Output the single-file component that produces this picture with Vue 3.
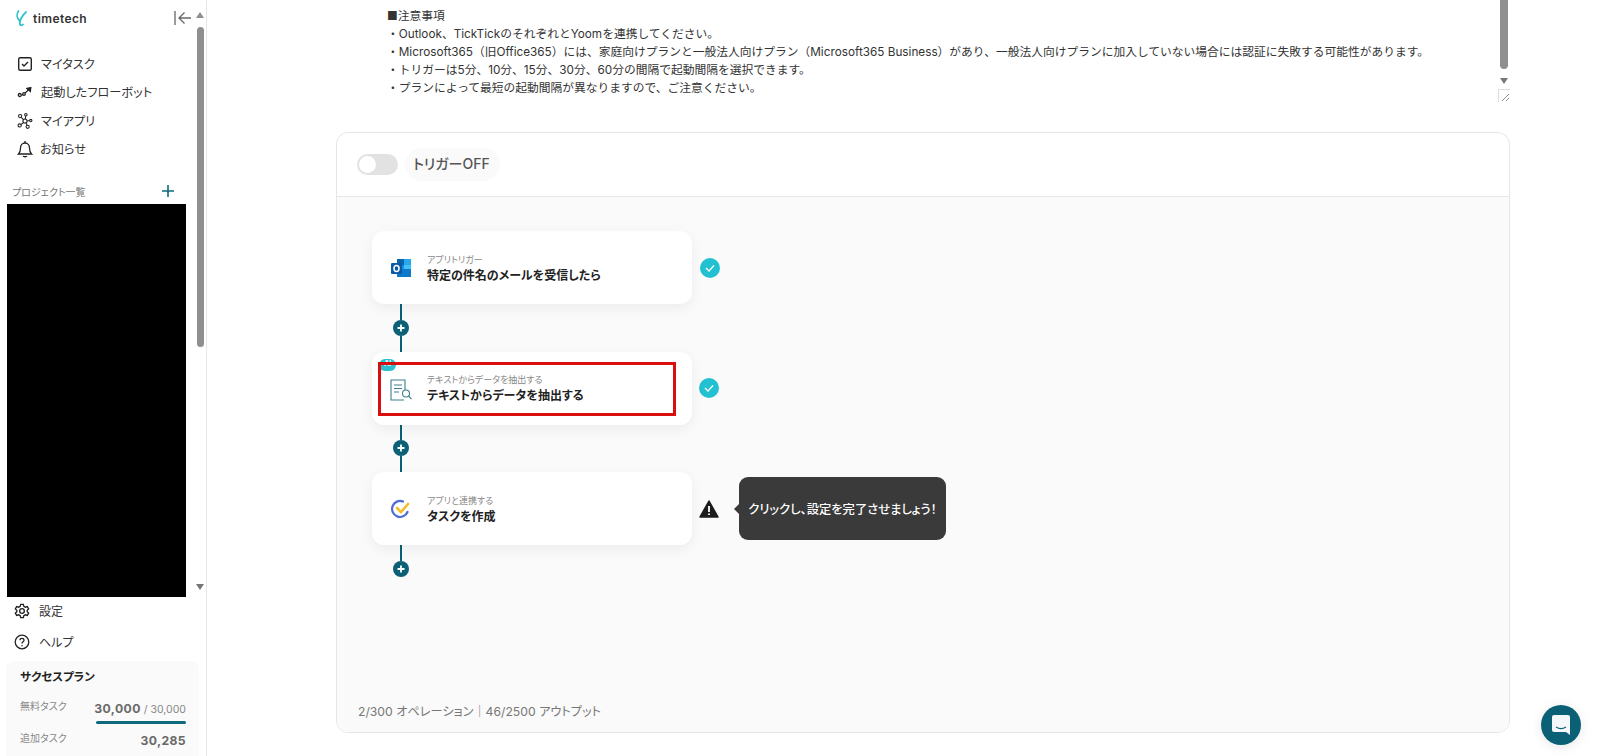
<script setup>
const notes = [
  '■注意事項',
  '・Outlook、TickTickのそれぞれとYoomを連携してください。',
  '・Microsoft365（旧Office365）には、家庭向けプランと一般法人向けプラン（Microsoft365 Business）があり、一般法人向けプランに加入していない場合には認証に失敗する可能性があります。',
  '・トリガーは5分、10分、15分、30分、60分の間隔で起動間隔を選択できます。',
  '・プランによって最短の起動間隔が異なりますので、ご注意ください。'
]
</script>

<template>
  <div class="app">
    <aside class="sidebar">
      <div class="side-main">
        <div class="side-content">
          <div class="brand">
            <svg class="logo" width="16" height="18" viewBox="0 0 16 18" fill="none" stroke="#35c4cf" stroke-width="1.800" stroke-linecap="round">
              <path d="M3.500 2C1.500 5 1.500 9 4.500 11.500M11 3C7.500 6.500 4 10.500 5 15.500 5.300 16.500 6.500 16.500 8 15.500"/>
            </svg>
            <span class="brand-name">timetech</span>
            <svg class="collapse" width="18" height="16" viewBox="0 0 18 16" fill="none" stroke="#666" stroke-width="1.300">
              <path d="M1 1v14M17 8H5M10.500 2.500 5 8l5.500 5.500"/>
            </svg>
          </div>
          <nav class="nav">
            <div class="nav-item">
              <svg width="16" height="16" viewBox="0 0 16 16" fill="none" stroke="#222" stroke-width="1.400"><rect x="1.700" y="1.700" width="12.600" height="12.600" rx="1.500"/><path d="m5 8 2 2 4-4"/></svg>
              <span>マイタスク</span>
            </div>
            <div class="nav-item">
              <svg width="16" height="16" viewBox="0 0 16 16" fill="none" stroke="#222" stroke-width="1.300"><circle cx="2.800" cy="11" r="1.500"/><circle cx="7" cy="10" r="1.300"/><path d="M4.300 11.300 5.800 10.500M8 9c1.500-1 2.500-2 3.500-3.500"/><path d="m10 4.500 3.800-.8-.5 3.800z" fill="#222"/></svg>
              <span>起動したフローボット</span>
            </div>
            <div class="nav-item">
              <svg width="18" height="18" viewBox="0 0 18 18" fill="none" stroke="#222" stroke-width="1.200"><circle cx="9" cy="9" r="2.300"/><circle cx="3.500" cy="3.500" r="1.800"/><circle cx="10" cy="2" r="1.400"/><circle cx="15.500" cy="8.500" r="1.300"/><circle cx="3" cy="14" r="1.800"/><circle cx="12" cy="15.500" r="1.800"/><path d="m4.800 4.800 2.500 2.600M9.800 3.400l-.5 3.300M11.300 8.800h2.900M4.500 13l3-2.400M10 11l1.400 2.800"/></svg>
              <span>マイアプリ</span>
            </div>
            <div class="nav-item bell">
              <svg width="16" height="18" viewBox="0 0 16 18" fill="none" stroke="#222" stroke-width="1.300"><path d="M1.500 14h13c-1.500-1.500-2-3-2-6 0-3-2-5-4.500-5S3.500 5 3.500 8c0 3-.5 4.500-2 6z"/><path d="M8 1v2M6 16c.5 1 3.500 1 4 0"/></svg>
              <span>お知らせ</span>
            </div>
          </nav>
          <div class="proj-head">
            <span>プロジェクト一覧</span>
            <svg width="12" height="12" viewBox="0 0 12 12" stroke="#0f6a7c" stroke-width="1.600"><path d="M6 0v12M0 6h12"/></svg>
          </div>
          <div class="redacted"></div>
        </div>
        <div class="side-scroll">
          <i class="arrow up"></i>
          <div class="side-thumb"></div>
          <i class="arrow down"></i>
        </div>
      </div>
      <div class="side-foot">
        <div class="foot-item">
          <svg width="16" height="16" viewBox="0 0 24 24" fill="none" stroke="#222" stroke-width="2"><circle cx="12" cy="12" r="3.500"/><path d="M10 2h4l.7 3 2.300 1.300 3-.9 2 3.500-2.200 2.100v2l2.200 2.100-2 3.500-3-.9L14.700 19l-.7 3h-4l-.7-3L7 17.700l-3 .9-2-3.500L4.200 13v-2L2 8.900l2-3.500 3 .9L9.300 5z"/></svg>
          <span>設定</span>
        </div>
        <div class="foot-item">
          <svg width="16" height="16" viewBox="0 0 16 16" fill="none" stroke="#222" stroke-width="1.300"><circle cx="8" cy="8" r="6.800"/><path d="M6 6.200C6 3.800 10 3.800 10 6.200 10 7.800 8 7.800 8 9.500"/><path d="M8 11v1.300"/></svg>
          <span>ヘルプ</span>
        </div>
        <div class="plan">
          <div class="plan-title">サクセスプラン</div>
          <div class="plan-row first">
            <span class="plan-label">無料タスク</span>
            <span class="plan-value"><b>30,000</b> / 30,000</span>
          </div>
          <div class="plan-bar"></div>
          <div class="plan-row">
            <span class="plan-label">追加タスク</span>
            <span class="plan-value"><b>30,285</b></span>
          </div>
        </div>
      </div>
    </aside>

    <main class="main">
      <div class="desc">
        <div class="desc-text">
          <div v-for="line in notes" :key="line" class="desc-line">{{ line }}</div>
        </div>
        <div class="desc-scroll">
          <div class="desc-thumb"></div>
          <i class="arrow down"></i>
          <div class="resizer">
            <svg width="12" height="13" viewBox="0 0 12 13" stroke="#777" stroke-width=".8"><path d="M3 11 10 4M7 11l3-3"/></svg>
          </div>
        </div>
      </div>

      <section class="panel">
        <header class="panel-head">
          <div class="toggle"><div class="knob"></div></div>
          <div class="trigger-pill">トリガーOFF</div>
        </header>
        <div class="canvas">
          <div class="row">
            <div class="card">
              <svg class="app-icon" width="22" height="22" viewBox="0 0 22 22">
                <rect x="7" y="2" width="14" height="18" rx="1" fill="#1490df"/>
                <rect x="7" y="2" width="7" height="6" fill="#0a64ad"/>
                <rect x="14" y="2" width="7" height="6" fill="#28a8ea"/>
                <rect x="14" y="8" width="7" height="6" fill="#50d9ff" opacity=".7"/>
                <path d="M7 12h14v8H7z" fill="#0f78c9"/>
                <rect x="1" y="6" width="11" height="11" rx="1" fill="#0a5aa6"/>
                <ellipse cx="6.500" cy="11.500" rx="2.500" ry="3" fill="none" stroke="#fff" stroke-width="1.500"/>
              </svg>
              <div class="card-text">
                <div class="card-sub">アプリトリガー</div>
                <div class="card-title">特定の件名のメールを受信したら</div>
              </div>
            </div>
            <svg class="check" width="20" height="20" viewBox="0 0 20 20"><circle cx="10" cy="10" r="10" fill="#22c1d2"/><path d="m6 10 3 3 5-5.500" fill="none" stroke="#fff" stroke-width="1.300"/></svg>
          </div>
          <div class="connector">
            <span class="line"></span>
            <svg class="plus" width="16" height="16" viewBox="0 0 16 16"><circle cx="8" cy="8" r="8" fill="#0b6076"/><path d="M8 4.500v7M4.500 8h7" stroke="#fff" stroke-width="1.800"/></svg>
            <span class="line"></span>
          </div>
          <div class="row">
            <div class="card">
              <span class="ai-badge">AI</span>
              <div class="red-box"></div>
              <svg class="app-icon" width="22" height="23" viewBox="0 0 22 23" fill="none" stroke="#3d7f8e" stroke-width="1.100">
                <path d="M15 12V2H1v20h13"/>
                <path d="M4 7h8M4 10.500h8M4 14h5"/>
                <circle cx="16" cy="15.500" r="3.500"/>
                <path d="m18.500 18 3 3"/>
              </svg>
              <div class="card-text">
                <div class="card-sub">テキストからデータを抽出する</div>
                <div class="card-title">テキストからデータを抽出する</div>
              </div>
            </div>
            <svg class="check check-two" width="20" height="20" viewBox="0 0 20 20"><circle cx="10" cy="10" r="10" fill="#22c1d2"/><path d="m6 10 3 3 5-5.500" fill="none" stroke="#fff" stroke-width="1.300"/></svg>
          </div>
          <div class="connector">
            <span class="line"></span>
            <svg class="plus" width="16" height="16" viewBox="0 0 16 16"><circle cx="8" cy="8" r="8" fill="#0b6076"/><path d="M8 4.500v7M4.500 8h7" stroke="#fff" stroke-width="1.800"/></svg>
            <span class="line"></span>
          </div>
          <div class="row">
            <div class="card">
              <svg class="app-icon" width="22" height="22" viewBox="0 0 22 22" fill="none">
                <path d="M17.500 14A8 8 0 1 1 13 3.500" stroke="#4f6bd8" stroke-width="2.200" stroke-linecap="round"/>
                <path d="m7 10 4 4 7-8" stroke="#f5bd2e" stroke-width="2.600" stroke-linecap="round"/>
              </svg>
              <div class="card-text">
                <div class="card-sub">アプリと連携する</div>
                <div class="card-title">タスクを作成</div>
              </div>
            </div>
            <svg class="warn" width="20" height="18" viewBox="0 0 20 18"><path d="M10 1 19 17H1z" fill="#1c1c1c" stroke="#1c1c1c" stroke-width="1.500" stroke-linejoin="round"/><path d="M10 6v6M10 13.500v1.500" stroke="#fff" stroke-width="1.800"/></svg>
            <div class="tooltip">クリックし、設定を完了させましょう！</div>
          </div>
          <div class="connector last">
            <span class="line"></span>
            <svg class="plus" width="16" height="16" viewBox="0 0 16 16"><circle cx="8" cy="8" r="8" fill="#0b6076"/><path d="M8 4.500v7M4.500 8h7" stroke="#fff" stroke-width="1.800"/></svg>
          </div>
          <div class="usage">2/300 オペレーション｜46/2500 アウトプット</div>
        </div>
      </section>
    </main>

    <button class="chat">
      <svg width="20" height="20" viewBox="0 0 20 20"><path d="M3 0h14a2 2 0 0 1 2 2v18l-4-3H3a2 2 0 0 1-2-2V2a2 2 0 0 1 2-2z" fill="#f4f8fa"/><path d="M5 12c3 2 7 2 10 0" fill="none" stroke="#0b6076" stroke-width="1.200"/></svg>
    </button>
  </div>
</template>

<style>
html, body { margin: 0; background: #fff; }
</style>

<style scoped>
.app {
  display: flex;
  width: 1600px;
  height: 756px;
  overflow: hidden;
  background: #fff;
  color: #222;
  font-family: Inter, "Noto Sans CJK JP", sans-serif;
  font-feature-settings: "palt";
}
.sidebar {
  width: 206px;
  flex: none;
  display: flex;
  flex-direction: column;
  border-right: 1px solid #e6e6e6;
}
.side-main {
  display: flex;
  height: 595px;
}
.side-content { width: 194px; flex: none; }
.brand {
  display: flex;
  align-items: center;
  height: 36px;
  padding-left: 15px;
}
.logo { margin-right: 2px; }
.brand-name { font-size: 12px; font-weight: 600; color: #333; letter-spacing: .4px; }
.collapse { margin-left: auto; margin-right: 2px; }
.nav { margin-top: 14px; }
.nav-item {
  display: flex;
  align-items: center;
  gap: 8px;
  height: 28.300px;
  padding-left: 17px;
  font-size: 12.200px;
  color: #333;
}
.nav-item svg { width: 16px; flex: none; }
.nav-item.bell { gap: 7px; }
.proj-head {
  display: flex;
  align-items: center;
  justify-content: space-between;
  margin-top: 18px;
  padding: 0 20px 0 12px;
  font-size: 10px;
  color: #777;
  height: 20px;
}
.redacted {
  margin: 3px 8px 0 7px;
  height: 393px;
  background: #000;
}
.side-scroll {
  width: 12px;
  display: flex;
  flex-direction: column;
  align-items: center;
  padding-top: 12px;
  box-sizing: border-box;
}
.side-thumb {
  width: 7px;
  height: 320px;
  margin-top: 9px;
  border-radius: 4px;
  background: #8f8f8f;
}
.arrow {
  display: block;
  width: 0;
  height: 0;
  border-left: 4px solid transparent;
  border-right: 4px solid transparent;
}
.arrow.up { border-bottom: 6px solid #8f8f8f; }
.arrow.down { border-top: 6px solid #777; }
.side-scroll .arrow.down { margin-top: auto; margin-bottom: 5px; }
.side-foot { flex: 1; display: flex; flex-direction: column; }
.foot-item {
  display: flex;
  align-items: center;
  gap: 9px;
  height: 31px;
  padding-left: 14px;
  font-size: 12px;
  color: #333;
}
.plan {
  flex: 1;
  margin: 4px 7px 0 6px;
  padding: 8px 13px 0 14px;
  background: #fafafa;
  border-radius: 8px 8px 0 0;
  box-sizing: border-box;
}
.plan-title { font-size: 11.500px; font-weight: 700; color: #222; line-height: 16px; }
.plan-row {
  display: flex;
  justify-content: space-between;
  align-items: flex-start;
  font-size: 10px;
  color: #888;
  line-height: 16px;
}
.plan-row.first { margin-top: 13px; }
.plan-label { color: #888; }
.plan-value { font-size: 10.500px; color: #888; padding-top: 3px; }
.plan-value b { font-size: 12.200px; font-weight: 700; color: #6a6a6a; letter-spacing: .4px; }
.plan-bar {
  margin: 3px 0 6px 76px;
  height: 3px;
  border-radius: 2px;
  background: #0f6a7c;
}
.main {
  flex: 1;
  min-width: 0;
  padding: 0 90px 0 129px;
}
.desc {
  display: flex;
  height: 104px;
  margin-bottom: 28px;
  padding-left: 51px;
}
.desc-text {
  flex: 1;
  padding-top: 7px;
  font-size: 11.750px;
  font-feature-settings: normal;
  line-height: 18px;
  color: #333;
  white-space: nowrap;
}
.desc-scroll {
  width: 12px;
  display: flex;
  flex-direction: column;
  align-items: center;
}
.desc-thumb {
  width: 8px;
  height: 69px;
  border-radius: 0 0 4px 4px;
  background: #8f8f8f;
}
.desc-scroll .arrow.down { margin-top: 9px; }
.resizer {
  margin-top: 5px;
  width: 12px;
  height: 13px;
  border: 1px solid #ddd;
  border-width: 1px 0 0 1px;
  box-sizing: border-box;
  line-height: 0;
}
.panel {
  height: 601px;
  border: 1px solid #e6e6e6;
  border-radius: 12px;
  overflow: hidden;
  box-sizing: border-box;
  display: flex;
  flex-direction: column;
}
.panel-head {
  height: 64px;
  flex: none;
  display: flex;
  align-items: center;
  gap: 7px;
  padding-left: 20px;
  border-bottom: 1px solid #e6e6e6;
  box-sizing: border-box;
}
.toggle {
  width: 41px;
  height: 21px;
  border-radius: 11px;
  background: #e2e2e2;
  padding: 2px;
  box-sizing: border-box;
}
.knob { width: 17px; height: 17px; border-radius: 50%; background: #fff; }
.trigger-pill {
  height: 33px;
  line-height: 32px;
  padding: 0 10px 0 8px;
  border-radius: 17px;
  background: #fafafa;
  font-size: 14px;
  font-weight: 500;
  color: #555;
}
.canvas {
  flex: 1;
  display: flex;
  flex-direction: column;
  padding: 34px 0 0 35px;
  background: #fafafa;
  min-height: 0;
}
.row { display: flex; align-items: center; }
.card {
  position: relative;
  width: 320px;
  height: 73px;
  flex: none;
  display: flex;
  align-items: center;
  background: #fff;
  border-radius: 12px;
  box-shadow: 0 4px 14px rgba(0, 0, 0, .06);
  box-sizing: border-box;
}
.app-icon { position: absolute; left: 18px; top: 26px; }
.card-text { margin-left: 55px; margin-top: 3px; }
.card-sub { font-size: 9px; line-height: 13px; color: #888; }
.card-title { font-size: 12px; font-weight: 700; line-height: 20px; color: #222; }
.check { margin-left: 8px; }
.check-two { margin-left: 7px; }
.warn { margin-left: 7px; }
.ai-badge {
  position: absolute;
  left: 7px;
  top: 7px;
  width: 17px;
  height: 12px;
  border-radius: 6px;
  background: #2bbfd0;
  color: #fff;
  font-size: 7px;
  font-weight: 700;
  line-height: 9px;
  text-align: center;
}
.red-box {
  position: absolute;
  left: 6px;
  top: 10px;
  width: 298px;
  height: 54px;
  border: 3px solid #d90f0f;
  box-sizing: border-box;
}
.connector {
  display: flex;
  flex-direction: column;
  align-items: center;
  width: 16px;
  height: 47.500px;
  margin-left: 21px;
}
.connector.last { height: 32px; }
.line { flex: 1; width: 2px; background: #0b6076; }
.plus { flex: none; }
.tooltip {
  position: relative;
  width: 207px;
  height: 63px;
  margin-left: 20px;
  display: flex;
  align-items: center;
  justify-content: center;
  background: #3a3a3a;
  border-radius: 9px;
  color: #fff;
  font-size: 12.300px;
  font-weight: 500;
  white-space: nowrap;
}
.tooltip::before {
  content: "";
  position: absolute;
  left: -5px;
  top: 27px;
  border-top: 5px solid transparent;
  border-bottom: 5px solid transparent;
  border-right: 5px solid #3a3a3a;
}
.usage {
  margin-top: auto;
  margin-left: -14px;
  margin-bottom: 11px;
  font-size: 12.200px;
  line-height: 18px;
  color: #777;
}
.chat {
  position: fixed;
  left: 1541px;
  top: 705px;
  width: 40px;
  height: 40px;
  padding: 0;
  border: none;
  border-radius: 50%;
  background: #0b6076;
  box-shadow: 0 2px 12px rgba(0, 0, 0, .1);
  display: flex;
  align-items: center;
  justify-content: center;
}
</style>
